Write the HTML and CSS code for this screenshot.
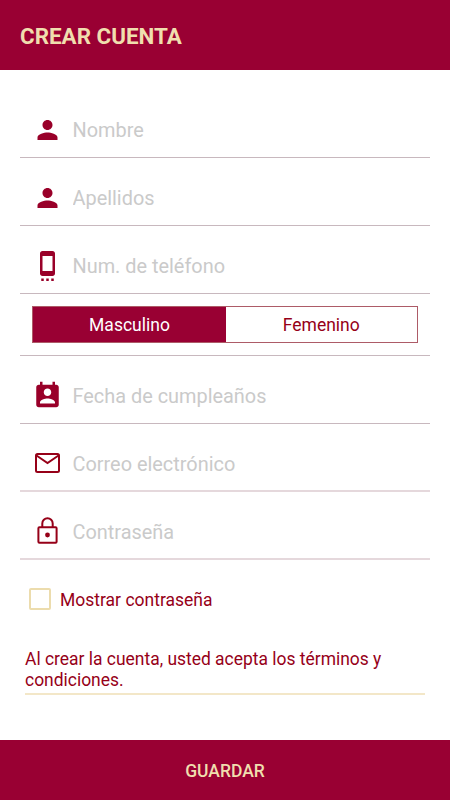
FILE: index.html
```html
<!DOCTYPE html>
<html lang="es">
<head>
<meta charset="utf-8">
<title>Crear cuenta</title>
<link rel="stylesheet" href="styles.css">
</head>
<body>
<header class="header"><h1>CREAR CUENTA</h1></header>
<main class="form">
  <label class="field">
    <svg class="icon" viewBox="0 0 24 24"><path d="M12 12c2.21 0 4-1.79 4-4s-1.79-4-4-4-4 1.790-4 4 1.790 4 4 4zm0 2c-2.670 0-8 1.340-8 4v2h16v-2c0-2.660-5.330-4-8-4z"/></svg>
    <input type="text" placeholder="Nombre">
  </label>
  <label class="field">
    <svg class="icon" viewBox="0 0 24 24"><path d="M12 12c2.21 0 4-1.79 4-4s-1.79-4-4-4-4 1.790-4 4 1.790 4 4 4zm0 2c-2.670 0-8 1.340-8 4v2h16v-2c0-2.660-5.330-4-8-4z"/></svg>
    <input type="text" placeholder="Apellidos">
  </label>
  <label class="field">
    <svg class="icon" viewBox="0 0 24 24"><path d="M7 24h2v-2H7v2zm4 0h2v-2h-2v2zm4 0h2v-2h-2v2zM16 .01L8 0C6.900 0 6 .9 6 2v16c0 1.100.9 2 2 2h8c1.100 0 2-.9 2-2V2c0-1.100-.9-1.990-2-1.990zM16 16H8V4h8v12z"/></svg>
    <input type="text" placeholder="Num. de teléfono">
  </label>
  <div class="gender">
    <div class="segments">
      <button class="segment selected" type="button">Masculino</button>
      <button class="segment" type="button">Femenino</button>
    </div>
  </div>
  <label class="field">
    <svg class="icon" viewBox="0 0 24 24"><path d="M19 3h-1V.5h-2V3H8V.5H6V3H5c-1.110 0-2 .9-2 2v14c0 1.100.89 2 2 2h14c1.100 0 2-.9 2-2V5c0-1.100-.9-2-2-2zm-7 3c1.660 0 3 1.340 3 3s-1.340 3-3 3-3-1.340-3-3 1.340-3 3-3zm6 12H6v-1c0-2 4-3.100 6-3.100s6 1.100 6 3.100v1z"/></svg>
    <input type="text" placeholder="Fecha de cumpleaños">
  </label>
  <label class="field soft">
    <svg class="icon outline" viewBox="0 0 30 30"><rect x="3.500" y="6" width="23" height="18" rx="1.500"/><path d="M4 7.500l11 7.500 11-7.500"/></svg>
    <input type="text" placeholder="Correo electrónico">
  </label>
  <label class="field soft">
    <svg class="icon outline" viewBox="0 0 30 30"><rect x="5.900" y="11.300" width="18.200" height="15.500" rx="1"/><path d="M9.800 11V7.500a5.200 5.200 0 0 1 10.400 0V11"/><circle class="dot" cx="15" cy="19" r="2.400"/></svg>
    <input type="password" placeholder="Contraseña">
  </label>
  <label class="show"><input type="checkbox"><span>Mostrar contraseña</span></label>
  <p class="terms">Al crear la cuenta, usted acepta los términos y condiciones.</p>
</main>
<button class="save" type="button">GUARDAR</button>
</body>
</html>
```
FILE: styles.css
```css
* { box-sizing: border-box; }
body {
  margin: 0;
  height: 800px;
  display: flex;
  flex-direction: column;
  background: #fff;
  color: #960018;
  font-family: Roboto, sans-serif;
}
button, input { font-family: inherit; }
.header {
  height: 70px;
  padding: 3px 20px 0;
  display: flex;
  align-items: center;
  background: #990033;
}
h1 {
  margin: 0;
  color: #f0deae;
  font-size: 22.4px;
  line-height: 29px;
  font-weight: 700;
}
.form { flex: 1; padding: 20px 20px 0; }
.field {
  height: 68px;
  padding: 13px 0 0 12px;
  display: flex;
  align-items: center;
  gap: 9.5px;
  border-bottom: 1px solid #c8b8be;
}
.icon { flex: none; width: 31px; height: 30px; fill: #990029; }
.outline { fill: none; stroke: #960018; stroke-width: 2; }
.outline .dot { fill: #960018; stroke: none; }
.field input {
  width: 330px;
  height: 32px;
  padding: 0;
  border: 0;
  outline: 0;
  background: transparent;
  font-size: 19.9px;
}
.field input::placeholder { color: #cacaca; opacity: 1; }
.soft { padding-top: 12px; border-bottom: 2px solid #e5d8dc; }
.soft input { padding-top: 2px; }
.gender {
  height: 62px;
  padding: 12px 12.5px 13px 12px;
  border-bottom: 1px solid #c8b8be;
}
.segments { display: flex; height: 37px; border: 1px solid #ad5b67; }
.segment {
  flex: 1;
  padding: 1px 0 0;
  border: 0;
  background: #fff;
  color: #960018;
  font-size: 17.5px;
}
.selected { flex: 0 0 193px; background: #990033; color: #fff; }
.show {
  display: flex;
  align-items: center;
  gap: 9px;
  height: 24px;
  margin: 27px 0 0 9px;
  font-size: 17.5px;
}
.show span { padding-top: 2px; }
.show input {
  appearance: none;
  width: 22px;
  height: 22px;
  margin: 0;
  border: 2px solid #ecdcad;
  border-radius: 2px;
}
.terms {
  margin: 38px 5px 0;
  padding: 0 0 3px;
  border-bottom: 2px solid #f3e7c8;
  font-size: 17.45px;
  line-height: 20.5px;
}
.save {
  height: 60px;
  padding: 2px 0 0;
  border: 0;
  background: #990033;
  color: #f0deae;
  font-size: 17.5px;
  font-weight: 500;
}
```
